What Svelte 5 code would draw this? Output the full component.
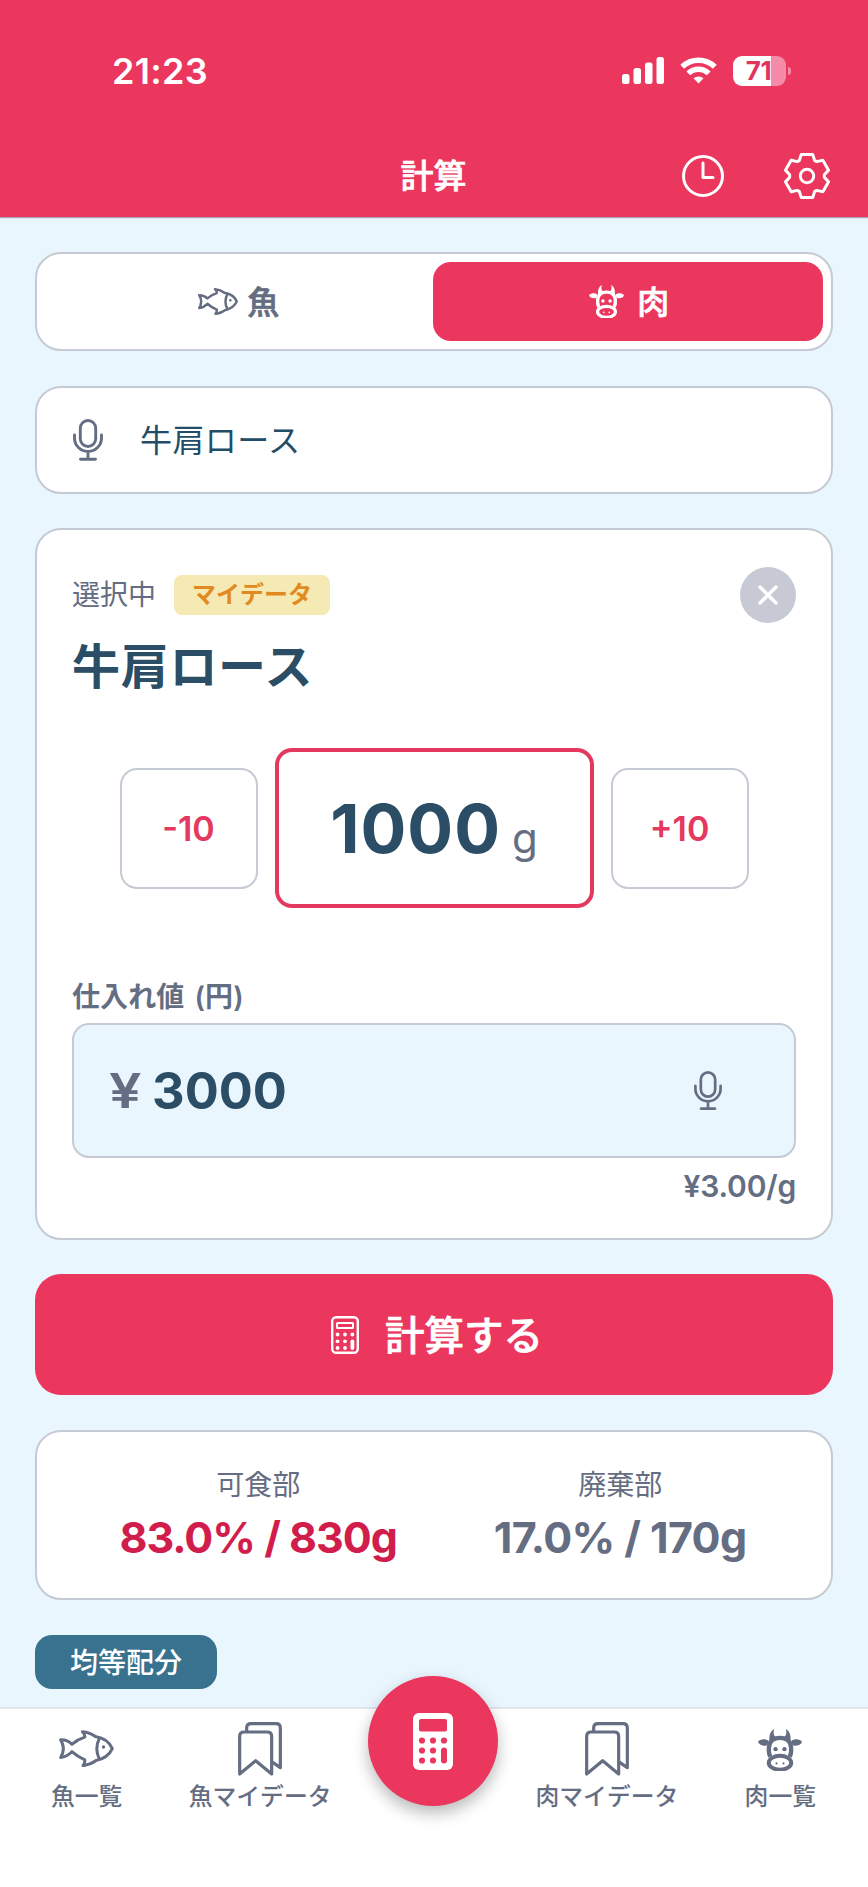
<script lang="ts">
  let mode = $state('meat');
  let keyword = $state('牛肩ロース');
  let grams = $state(1000);
  let price = $state(3000);

  const edibleRate = 83;

  let unitPrice = $derived((price / grams).toFixed(2));
  let edible = $derived(Math.round((grams * edibleRate) / 100));
  let waste = $derived(grams - edible);

  // six teeth, each one 60 degrees further round
  const tooth = [[-7.6, -15.6], [-5.7, -21.6], [5.7, -21.6], [7.6, -15.6]];
  const gear = [0, 1, 2, 3, 4, 5]
    .flatMap((i) => {
      const a = (i * Math.PI) / 3;
      return tooth.map(([x, y]) => `${x * Math.cos(a) - y * Math.sin(a)},${x * Math.sin(a) + y * Math.cos(a)}`);
    })
    .join(' ');
</script>

{#snippet fish(width, stroke)}
  <svg class="line" {width} viewBox="0 0 162 110" stroke-width={stroke}>
    <path d="M5 29 Q24 28 38 42 Q56 27 76 21 Q77 13 69 5 Q92 7 107 19 Q145 25 157 55 Q144 83 109 90 Q95 101 71 105 Q77 96 76 88 Q55 79 38 64 Q23 79 5 81 Q12 70 13 55 Q12 41 5 29 Z" />
    <path d="M119 24 Q104 55 119 86" />
    <circle cx="131" cy="50" r="5" fill="currentColor" stroke="none" />
  </svg>
{/snippet}

{#snippet cow(width)}
  <svg {width} viewBox="0 0 133 129" fill="currentColor">
    <path d="M36 40 C32 22 36 8 49 0 C46 12 46 19 56 26 Z" />
    <path d="M97 40 C101 22 97 8 84 0 C87 12 87 19 77 26 Z" />
    <path d="M0 38 C9 30 22 29 32 36 L29 48 C16 54 3 49 0 38 Z" />
    <path d="M133 38 C124 30 111 29 101 36 L104 48 C117 54 130 49 133 38 Z" />
    <path d="M37 84 C32 74 32 66 33 55 C35 38 46 27 66.500 27 C87 27 98 38 100 55 C101 66 101 74 96 84" fill="none" stroke="currentColor" stroke-width="13" />
    <ellipse cx="66.500" cy="102" rx="34" ry="21" fill="none" stroke="currentColor" stroke-width="12" />
    <circle cx="53" cy="61" r="6.500" />
    <circle cx="80" cy="61" r="6.500" />
    <circle cx="56" cy="104" r="3.200" />
    <circle cx="77" cy="104" r="3.200" />
  </svg>
{/snippet}

{#snippet mic(width)}
  <svg class="line" {width} viewBox="0 0 30 42" stroke-width="2.900">
    <rect x="7.300" y="1.500" width="15.400" height="26" rx="7.700" />
    <path d="M1.500 16 V19 A13.500 13.500 0 0 0 28.500 19 V16 M15 32.500 V40.300 M7.500 40.300 H22.500" />
  </svg>
{/snippet}

{#snippet bookmarks()}
  <svg class="line" width="44" viewBox="0 0 132 162" stroke-width="9.500">
    <path d="M5 156 V43 Q5 30 18 30 H88 Q101 30 101 43 V156 L53 116 Z" />
    <path d="M26 28 V18 Q26 5 39 5 H114 Q127 5 127 18 V137 L104 121" />
  </svg>
{/snippet}

<div class="app">
  <header>
    <div class="status">
      <span class="time">21:23</span>
      <div class="signals">
        <svg width="42" height="27" viewBox="0 0 42 27" fill="#fff">
          <rect x="0" y="17" width="7.500" height="10" rx="2.500" />
          <rect x="11.500" y="11" width="7.500" height="16" rx="2.500" />
          <rect x="23" y="5.500" width="7.500" height="21.500" rx="2.500" />
          <rect x="34.500" y="0" width="7.500" height="27" rx="2.500" />
        </svg>
        <svg class="wifi" width="37" height="27" viewBox="0 0 37 27" fill="none" stroke="#fff" stroke-width="5.400">
          <path d="M2.200 9.800 A23.500 23.500 0 0 1 34.800 9.800" />
          <path d="M8.300 16.400 A14.600 14.600 0 0 1 28.700 16.400" />
          <path d="M13.500 21.300 A7.500 7.500 0 0 1 23.500 21.300 L18.500 26.500 Z" fill="#fff" stroke="none" />
        </svg>
        <div class="battery"><span>71</span></div>
        <i class="nub"></i>
      </div>
    </div>
    <div class="titlebar">
      <h1>計算</h1>
      <div class="actions">
        <svg class="line" width="42" height="42" viewBox="0 0 42 42" stroke-width="3">
          <circle cx="21" cy="21" r="19.500" />
          <path d="M21 8 V22.600 H31" />
        </svg>
        <svg class="line" width="48" height="48" viewBox="-24 -24 48 48" stroke-width="3">
          <polygon points={gear} />
          <circle r="6.700" />
        </svg>
      </div>
    </div>
  </header>

  <main>
    <div class="box toggle">
      <button class:active={mode === 'fish'} onclick={() => (mode = 'fish')}>
        {@render fish(40, 10)}<span>魚</span>
      </button>
      <button class="meat" class:active={mode === 'meat'} onclick={() => (mode = 'meat')}>
        {@render cow(35)}<span>肉</span>
      </button>
    </div>

    <div class="box search">
      {@render mic(30)}
      <span>{keyword}</span>
    </div>

    <section class="box selected">
      <div class="selected-head">
        <span class="muted">選択中</span>
        <span class="badge">マイデータ</span>
        <button class="close" aria-label="閉じる">
          <svg class="line" width="20" height="20" viewBox="0 0 20 20" stroke-width="3.400"><path d="M2 2 L18 18 M18 2 L2 18" /></svg>
        </button>
      </div>
      <h2>{keyword}</h2>

      <div class="amount">
        <button class="step" onclick={() => (grams -= 10)}>-10</button>
        <div class="grams"><b>{grams}</b><span>g</span></div>
        <button class="step" onclick={() => (grams += 10)}>+10</button>
      </div>

      <div class="label">仕入れ値 (円)</div>
      <div class="price">
        <span class="yen">¥</span>
        <b>{price}</b>
        {@render mic(28)}
      </div>
      <div class="unit">¥{unitPrice}/g</div>
    </section>

    <button class="calc">
      <svg class="line" width="28" height="38" viewBox="0 0 28 38" stroke-width="2.400">
        <rect x="1.200" y="1.200" width="25.600" height="35.600" rx="4" />
        <rect x="6" y="7" width="16" height="5" rx="0.500" stroke-width="2" />
        <g fill="#fff" stroke="none">
          {#each [18.5, 25.3, 32] as cy}
            {#each [6.6, 14, 21.4] as cx}
              {#if cx < 20 || cy < 20}<circle {cx} {cy} r="1.900" />{/if}
            {/each}
          {/each}
          <rect x="19.500" y="23.400" width="3.800" height="10.500" rx="1.900" />
        </g>
      </svg>
      <span>計算する</span>
    </button>

    <div class="box result">
      <div>
        <span class="muted">可食部</span>
        <strong class="edible">{edibleRate.toFixed(1)}% / {edible}g</strong>
      </div>
      <div>
        <span class="muted">廃棄部</span>
        <strong>{(100 - edibleRate).toFixed(1)}% / {waste}g</strong>
      </div>
    </div>

    <span class="tag">均等配分</span>
  </main>

  <nav>
    <div class="item"><div class="icon">{@render fish(55, 9)}</div>魚一覧</div>
    <div class="item"><div class="icon">{@render bookmarks()}</div>魚マイデータ</div>
    <div class="item">
      <div class="fab">
        <svg width="40" height="57" viewBox="0 0 40 57">
          <rect width="40" height="57" rx="6" fill="#fff" />
          <g fill="#eb365d">
            <rect x="6" y="6" width="28" height="12.500" rx="2" />
            {#each [27.5, 37.5, 47.5] as cy}
              {#each [9, 20, 31] as cx}
                {#if cx < 30 || cy < 30}<circle {cx} {cy} r="3.100" />{/if}
              {/each}
            {/each}
            <rect x="28" y="34.500" width="6" height="16" rx="3" />
          </g>
        </svg>
      </div>
    </div>
    <div class="item"><div class="icon">{@render bookmarks()}</div>肉マイデータ</div>
    <div class="item"><div class="icon low">{@render cow(44)}</div>肉一覧</div>
  </nav>
</div>

<style>
  :global(body) {
    margin: 0;
  }

  .app {
    display: flex;
    flex-direction: column;
    width: 868px;
    height: 1887px;
    overflow: hidden;
    background: #eaf6fd;
    color: #656d82;
    font-family: Inter, 'Noto Sans CJK JP', sans-serif;
  }

  .app * {
    box-sizing: border-box;
  }

  svg {
    display: block;
    flex: none;
  }

  .line {
    fill: none;
    stroke: currentColor;
    stroke-linecap: round;
    stroke-linejoin: round;
  }

  button {
    display: flex;
    align-items: center;
    justify-content: center;
    border: none;
    padding: 0;
    font-family: inherit;
    color: inherit;
    cursor: pointer;
  }

  /* medium kanji, slightly thickened */
  h1,
  .toggle span,
  .calc span {
    font-weight: 500;
    -webkit-text-stroke: 0.7px currentColor;
  }

  header {
    height: 217px;
    flex: none;
    background: #eb365d;
    color: #fff;
    box-shadow: 0 1px 1px #a8a0b8;
  }

  .status {
    display: flex;
    justify-content: space-between;
    align-items: center;
    height: 141px;
    padding: 0 77px 0 112px;
  }

  .time {
    font-size: 36px;
    font-weight: 600;
    letter-spacing: 0.3px;
  }

  .signals {
    display: flex;
    align-items: center;
  }

  .wifi {
    margin: 0 16px;
  }

  .battery {
    display: flex;
    align-items: center;
    justify-content: center;
    width: 53px;
    height: 30px;
    border-radius: 9px;
    background: linear-gradient(to right, #fff 71%, #f58ba8 71%);
    color: #e0365c;
    font-size: 26px;
    font-weight: 700;
    letter-spacing: -0.3px;
  }

  .battery span {
    padding-right: 2px;
  }

  .nub {
    width: 3px;
    height: 8px;
    margin-left: 2px;
    border-radius: 0 3px 3px 0;
    background: #f58ba8;
  }

  .titlebar {
    display: grid;
    grid-template-columns: 1fr auto 1fr;
    align-items: center;
    height: 70px;
    padding: 0 37px 0 36px;
  }

  h1 {
    grid-column: 2;
    margin: 0;
    font-size: 33px;
    line-height: 48px;
  }

  .actions {
    display: flex;
    align-items: center;
    justify-content: flex-end;
    gap: 59px;
  }

  main {
    display: flex;
    flex-direction: column;
    flex: 1;
    min-height: 0;
    padding: 35px 35px 0;
  }

  .box {
    flex: none;
    border: 2px solid #c6cad4;
    border-radius: 26px;
    background: #fff;
  }

  .toggle {
    display: flex;
    height: 99px;
    padding: 8px;
  }

  .toggle button {
    flex: 1;
    gap: 9px;
    border-radius: 18px;
    background: none;
    font-size: 32px;
  }

  .toggle span {
    padding-bottom: 4px;
  }

  .toggle .meat {
    gap: 13px;
    padding-left: 3px;
  }

  .toggle .active {
    background: #eb365d;
    color: #fff;
  }

  .search {
    display: flex;
    align-items: center;
    gap: 37px;
    height: 108px;
    margin-top: 35px;
    padding: 0 36px;
    font-size: 32px;
  }

  .search span {
    padding-bottom: 4px;
    color: #234d66;
    letter-spacing: 0.4px;
  }

  .selected {
    height: 712px;
    margin-top: 34px;
    padding: 35px 35px 0;
  }

  .selected-head {
    display: flex;
    align-items: center;
    height: 60px;
  }

  .muted {
    font-size: 28px;
    line-height: 40px;
  }

  .badge {
    height: 40px;
    margin-left: 18px;
    padding: 0 18px;
    border-radius: 8px;
    background: #f6eab4;
    color: #e28a22;
    font-size: 24px;
    font-weight: 700;
    line-height: 39px;
  }

  .close {
    width: 56px;
    height: 56px;
    margin-left: auto;
    border-radius: 50%;
    background: #c7cad5;
    color: #fff;
  }

  h2 {
    margin: 6px 0 0;
    color: #2b4d65;
    font-size: 48px;
    font-weight: 700;
    line-height: 72px;
    letter-spacing: 0.7px;
  }

  .amount {
    display: flex;
    align-items: center;
    justify-content: center;
    gap: 17px;
    height: 160px;
    margin-top: 45px;
  }

  .step {
    width: 138px;
    height: 121px;
    border: 2px solid #c6cad4;
    border-radius: 17px;
    background: #fff;
    color: #e4385f;
    font-size: 34px;
    font-weight: 600;
  }

  .grams {
    display: flex;
    align-items: baseline;
    justify-content: center;
    width: 319px;
    height: 160px;
    border: 4px solid #e4385f;
    border-radius: 17px;
    line-height: 152px;
  }

  .grams b {
    color: #2b4d65;
    font-size: 68px;
    letter-spacing: 1px;
  }

  .grams span {
    margin-left: 11px;
    font-size: 42px;
  }

  .label {
    margin-top: 69px;
    font-size: 28px;
    font-weight: 600;
    line-height: 40px;
    letter-spacing: 0.1px;
    word-spacing: 3px;
  }

  .price {
    display: flex;
    align-items: center;
    height: 135px;
    margin-top: 6px;
    padding: 0 72px 0 35px;
    border: 2px solid #c6cad4;
    border-radius: 17px;
    background: #eaf6fd;
    font-size: 50.5px;
  }

  .price .yen {
    font-size: 48px;
    font-weight: 600;
    transform: scaleX(1.2);
    transform-origin: left;
  }

  .price b {
    flex: 1;
    margin-left: 16px;
    color: #2b4d65;
  }

  .unit {
    margin-top: 8px;
    font-size: 30px;
    font-weight: 600;
    line-height: 40px;
    letter-spacing: -0.2px;
    text-align: right;
  }

  .calc {
    flex: none;
    gap: 26px;
    height: 121px;
    margin-top: 34px;
    padding-left: 6px;
    border-radius: 26px;
    background: #eb365d;
    color: #fff;
    font-size: 39.5px;
  }

  .calc span {
    padding-bottom: 4px;
  }

  .result {
    display: flex;
    justify-content: space-around;
    height: 170px;
    margin-top: 35px;
    padding: 33px 36px 0 34px;
  }

  .result div {
    display: flex;
    flex-direction: column;
    align-items: center;
  }

  .result strong {
    font-size: 43px;
    line-height: 64px;
    letter-spacing: -0.6px;
  }

  .result .edible {
    color: #d11d4c;
    letter-spacing: -1px;
  }

  .tag {
    align-self: flex-start;
    height: 54px;
    margin-top: 35px;
    padding: 0 35px;
    border-radius: 17px;
    background: #38728f;
    color: #fff;
    font-size: 28px;
    font-weight: 500;
    line-height: 57px;
  }

  nav {
    display: grid;
    grid-template-columns: repeat(5, 1fr);
    flex: none;
    height: 180px;
    padding-right: 1px;
    border-top: 2px solid #dfe5ec;
    background: #fff;
  }

  .item {
    display: flex;
    flex-direction: column;
    align-items: center;
    font-size: 23.8px;
    font-weight: 500;
    line-height: 36px;
    white-space: nowrap;
  }

  .icon {
    display: flex;
    align-items: center;
    height: 70px;
    padding-top: 9px;
  }

  .icon.low {
    padding-top: 12px;
  }

  .fab {
    display: flex;
    align-items: center;
    justify-content: center;
    width: 130px;
    height: 130px;
    margin-top: -33px;
    border-radius: 50%;
    background: #eb365d;
    box-shadow: 0 7px 16px rgba(0, 0, 0, 0.28);
  }
</style>
